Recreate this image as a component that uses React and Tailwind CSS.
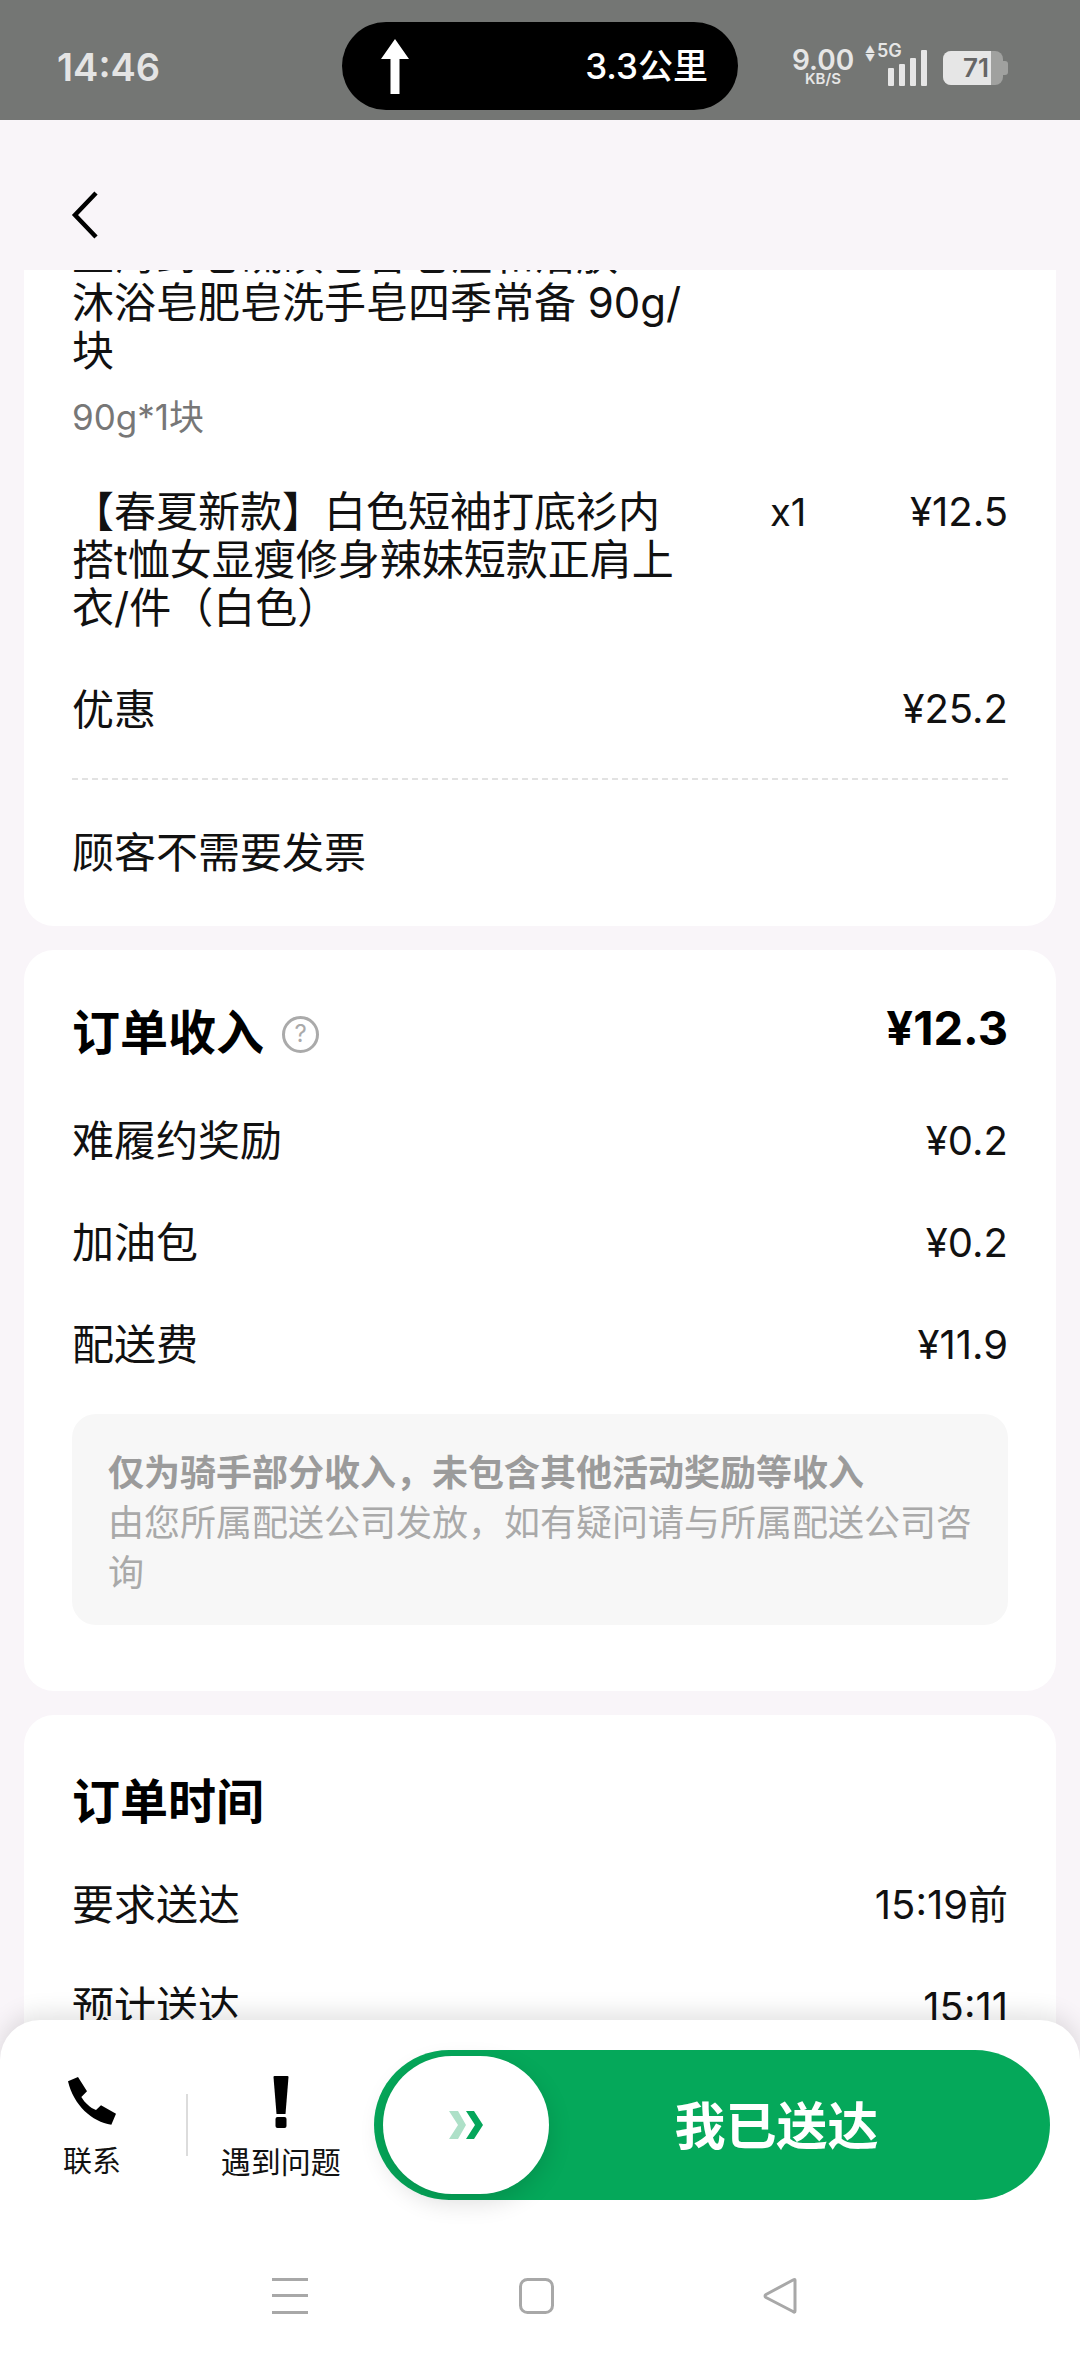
import React from 'react';

const font = { fontFamily: '"Inter", "Noto Sans CJK SC", sans-serif' };

const PhoneIcon = () => (
  <svg width="50" height="50" viewBox="85 72 150 150">
    <path d="M88 88 L118 75 L145 118 L128 135 C138 152 155 168 172 174 L187 160 L232 185 L218 218 C160 210 105 160 88 88 Z" fill="#000" />
  </svg>
);

const AlertIcon = () => (
  <svg width="16" height="52" viewBox="0 0 16 52">
    <path d="M0.5 1 Q0.5 0 1.5 0 L14.5 0 Q15.5 0 15.5 1 L12.5 38 L3.5 38 Z" fill="#000" />
    <rect x="2.5" y="41" width="11" height="11" rx="2" fill="#000" />
  </svg>
);

const ChevronsIcon = () => (
  <svg width="36" height="28" viewBox="0 0 36 28">
    <path d="M1 0 L10 0 L18 14 L10 28 L1 28 L10 14 Z" fill="#aee0c8" />
    <path d="M18 0 L26 0 L35 14 L26 28 L18 28 L27 14 Z" fill="#05a65b" />
  </svg>
);

const SignalIcon = () => (
  <svg width="39" height="36" viewBox="0 0 39 36">
    <rect x="0" y="18" width="6" height="18" rx="1" fill="#e6e6e6" />
    <rect x="11" y="14" width="6" height="22" rx="1" fill="#e6e6e6" />
    <rect x="22" y="8" width="6" height="28" rx="1" fill="#e6e6e6" />
    <rect x="33" y="0" width="6" height="36" rx="1" fill="#e6e6e6" />
  </svg>
);

function StatusBar() {
  return (
    <div className="h-[120px] bg-[#747674] flex items-center pl-[57px] pt-[14px] shrink-0">
      <div className="w-[285px] text-[38px] font-semibold text-[#e4e4e4] leading-none">14:46</div>
      <div className="w-[396px] h-[88px] mt-[-2px] bg-black rounded-[44px] flex items-center justify-between pl-[38px] pr-[30px]">
        <svg width="30" height="55" viewBox="0 0 30 55">
          <path d="M15 0 L29 20 L19.5 20 L19.5 55 L10.5 55 L10.5 20 L1 20 Z" fill="#fff" />
        </svg>
        <span className="text-[35px] font-medium text-white leading-none">3.3公里</span>
      </div>
      <div className="ml-[54px] flex items-center h-[60px]">
        <div className="w-[62px] flex flex-col items-center text-[#e6e6e6] font-semibold leading-none">
          <span className="text-[28px] leading-[24px]">9.00</span>
          <span className="text-[15px] leading-[14px]">KB/S</span>
        </div>
        <div className="relative w-[62px] h-[60px] ml-[11px]">
          <span className="absolute left-0 top-[8px] text-[10px] leading-[9px] text-[#e6e6e6]">▲<br />▼</span>
          <span className="absolute left-[12px] top-[5px] text-[18px] font-semibold leading-[18px] text-[#e6e6e6]">5G</span>
          <div className="absolute left-[23px] top-[13px]">
            <SignalIcon />
          </div>
        </div>
        <div className="ml-[16px] w-[60px] h-[34px] mt-[2px] rounded-[8px] bg-[#a0a19f] overflow-hidden flex">
          <div className="w-[48px] h-full bg-[#e6e6e6] flex items-center justify-end pr-[2px] text-[26px] font-semibold leading-none text-[#666]">71</div>
        </div>
        <div className="w-[5px] h-[14px] mt-[2px] rounded-r-[3px] bg-[#a0a19f]" />
      </div>
    </div>
  );
}

function ItemRow({ lines, qty, price }) {
  return (
    <div className="flex mt-[6px]">
      <div className="w-[640px] text-[42px] leading-[48px]">{lines}</div>
      <div className="w-[90px] ml-[58px] text-[38px] leading-[48px]">{qty}</div>
      <div className="flex-1 text-right text-[40px] leading-[48px]">{price}</div>
    </div>
  );
}

function Row({ label, value }) {
  return (
    <div className="flex items-center justify-between h-[102px]">
      <span className="text-[42px] leading-[48px]">{label}</span>
      <span className="text-[40px] leading-[48px]">{value}</span>
    </div>
  );
}

export default function App() {
  return (
    <div style={font} className="w-[1080px] h-[2362px] flex flex-col overflow-hidden bg-[#f9f5f9] text-[#111]">
      <StatusBar />

      {/* Header */}
      <div className="h-[150px] shrink-0 flex items-center pl-[71px] pt-[39px]">
        <svg width="28" height="48" viewBox="0 0 28 48">
          <path d="M25 2 L4 24 L25 46" fill="none" stroke="#000" strokeWidth="4.5" />
        </svg>
      </div>

      {/* Scrolled content */}
      <div className="flex-1 overflow-hidden px-[24px]">
        <div className="-mt-[39px] bg-white rounded-[30px] px-[48px] pb-[49px] overflow-hidden">
          <div className="text-[42px] leading-[48px] w-[660px]">
            上海药皂硫磺皂香皂温和洁肤
            <br />
            沐浴皂肥皂洗手皂四季常备 90g/
            <br />
            块
          </div>
          <div className="text-[35px] leading-[48px] text-[#777] mt-[18px]">90g*1块</div>
          <div className="mt-[47px]">
            <ItemRow
              lines={
                <>
                  【春夏新款】白色短袖打底衫内
                  <br />
                  搭t恤女显瘦修身辣妹短款正肩上
                  <br />
                  衣/件（白色）
                </>
              }
              qty="x1"
              price="¥12.5"
            />
          </div>
          <div className="flex items-center justify-between mt-[53px] h-[48px]">
            <span className="text-[42px]">优惠</span>
            <span className="text-[40px]">¥25.2</span>
          </div>
          <div className="border-t-2 border-dashed border-[#e2e2e2] mt-[45px]" />
          <div className="text-[42px] leading-[48px] mt-[49px]">顾客不需要发票</div>
        </div>

        <div className="mt-[24px] bg-white rounded-[30px] px-[48px] pb-[66px] overflow-hidden">
          <div className="flex justify-between h-[140px]">
            <div className="flex items-center pt-[26px]">
              <span className="text-[48px] font-bold leading-none text-black">订单收入</span>
              <span className="ml-[18px] mt-[2px] w-[37px] h-[37px] rounded-full border-[3px] border-[#aaa] flex items-center justify-center text-[24px] leading-none text-[#aaa]">?</span>
            </div>
            <div className="flex items-center pt-[15px] text-[47px] font-bold leading-none text-black">¥12.3</div>
          </div>
          <Row label="难履约奖励" value="¥0.2" />
          <Row label="加油包" value="¥0.2" />
          <Row label="配送费" value="¥11.9" />
          <div className="mt-[18px] h-[211px] bg-[#f7f7f7] rounded-[24px] px-[36px] pt-[34px] text-[36px] leading-[50px] text-[#a9a9a9]">
            <div className="font-bold text-[#9b9b9b]">仅为骑手部分收入，未包含其他活动奖励等收入</div>
            <div>由您所属配送公司发放，如有疑问请与所属配送公司咨询</div>
          </div>
        </div>

        <div className="mt-[24px] bg-white rounded-[30px] px-[48px] pb-[60px]">
          <div className="flex items-center h-[139px] pt-[34px]">
            <span className="text-[48px] font-bold leading-none text-black">订单时间</span>
          </div>
          <Row label="要求送达" value="15:19前" />
          <Row label="预计送达" value="15:11" />
        </div>
      </div>

      {/* Bottom action bar */}
      <div className="relative z-10 -mt-[40px] h-[342px] shrink-0 bg-white rounded-t-[40px] shadow-[0_-6px_24px_rgba(0,0,0,0.12)]">
        <div className="flex items-center pt-[30px] pl-[40px] pr-[30px]">
          <div className="w-[104px] pt-[6px] flex flex-col items-center">
            <PhoneIcon />
            <span className="mt-[18px] text-[29px] leading-[36px]">联系</span>
          </div>
          <div className="w-[2px] h-[62px] ml-[42px] bg-[#dcdcdc]" />
          <div className="w-[118px] ml-[34px] pt-[6px] flex flex-col items-center">
            <AlertIcon />
            <span className="mt-[16px] text-[30px] leading-[36px] whitespace-nowrap">遇到问题</span>
          </div>
          <div className="ml-[34px] w-[677px] h-[150px] rounded-[75px] bg-[#05a85a] flex items-center pl-[9px] pr-[46px]">
            <div className="w-[166px] h-[138px] rounded-[69px] bg-white flex items-center justify-center shadow-[0_8px_24px_rgba(0,0,0,0.14)] shrink-0">
              <ChevronsIcon />
            </div>
            <div className="flex-1 pt-[3px] text-center text-[51px] font-bold text-white leading-none">我已送达</div>
          </div>
        </div>

        {/* Navigation bar */}
        <div className="flex items-center pl-[272px] mt-[78px]">
          <svg width="36" height="36" viewBox="0 0 36 36">
            <rect x="0" y="0" width="36" height="3" fill="#a8a8a8" />
            <rect x="0" y="16" width="36" height="3" fill="#a8a8a8" />
            <rect x="0" y="33" width="36" height="3" fill="#a8a8a8" />
          </svg>
          <svg className="ml-[211px]" width="35" height="36" viewBox="0 0 35 36">
            <rect x="1.5" y="1.5" width="32" height="33" rx="7" fill="none" stroke="#a8a8a8" strokeWidth="3" />
          </svg>
          <svg className="ml-[209px]" width="35" height="36" viewBox="0 0 35 36">
            <path d="M32 2 L32 33 Q32 35 30 33.5 L3 19.5 Q1 18 3 16.5 L30 2 Q32 1 32 2 Z" fill="none" stroke="#a8a8a8" strokeWidth="3" strokeLinejoin="round" />
          </svg>
        </div>
      </div>
    </div>
  );
}
